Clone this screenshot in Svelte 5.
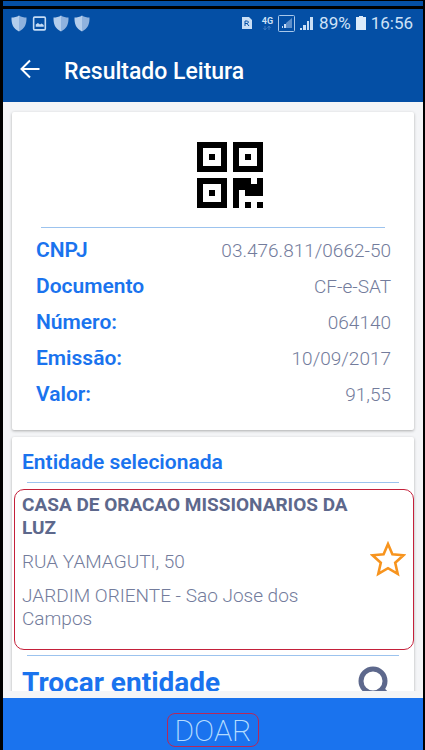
<script>
const receipt = [
    { label: 'CNPJ', value: '03.476.811/0662-50' },
    { label: 'Documento', value: 'CF-e-SAT' },
    { label: 'Número:', value: '064140' },
    { label: 'Emissão:', value: '10/09/2017' },
    { label: 'Valor:', value: '91,55' },
];

const finders = [[0, 0], [6, 0], [0, 6]];

let favorite = $state(false);
</script>

{#snippet shield()}
    <svg class="status-icon" viewBox="0 0 16 17" aria-hidden="true">
        <path d="M8 0.5C6 2 3 2.6 0.5 2.6C0.3 9 2.2 14 8 16.5Z" fill="#b3cdec" />
        <path d="M8 0.5C10 2 13 2.6 15.5 2.6C15.7 9 13.8 14 8 16.5Z" fill="#8fb2de" />
    </svg>
{/snippet}

<div class="device">
    <div class="strip"></div>
    <div class="screen">
        <header>
            <div class="status">
                <div class="status-group">
                    {@render shield()}
                    <svg class="status-icon picture" viewBox="0 0 14 16" aria-hidden="true">
                        <rect x="1" y="2" width="11" height="12" rx="1" fill="none" stroke="#c5dcf5" stroke-width="1.5" />
                        <path d="M3 11V9L5 7.5L7 9L8.500 8L10.500 9.500V11Z" fill="#c5dcf5" />
                    </svg>
                    {@render shield()}
                    {@render shield()}
                </div>
                <div class="status-group right">
                    <svg class="sim" viewBox="0 0 12 14" aria-hidden="true">
                        <path d="M1 1H8L11 4V13H1Z" fill="#c9def5" />
                        <path d="M4 10V5H6.500L7.500 6L6.500 7.500H4M6 7.500L8 10" fill="none" stroke="#044fa5" />
                    </svg>
                    <span class="network">4G<svg viewBox="0 0 8 4" aria-hidden="true"><path d="M2 0V4M0.500 2L2 4L3.500 2M6 4V0M4.500 2L6 0L7.500 2" fill="none" stroke="#3b79bf" /></svg></span>
                    <svg class="signal-box" viewBox="0 0 17 17" aria-hidden="true">
                        <rect x="0.500" y="0.500" width="16" height="16" rx="1" fill="none" stroke="#a9c8ea" />
                        <path d="M4 11H5V13H4ZM6 9H8V13H6Z" fill="#c9def5" />
                        <path d="M8 8L14 3V13H8Z" fill="#5f90ca" />
                    </svg>
                    <svg class="signal" viewBox="0 0 14 14" aria-hidden="true">
                        <path d="M0 12H2V14H0ZM3 9H6V14H3ZM7 5H9V14H7ZM10 1H13V14H10Z" fill="#c9def5" />
                    </svg>
                    <span class="percent">89%</span>
                    <svg class="battery" viewBox="0 0 10 14" aria-hidden="true">
                        <path d="M3 0H7V1H10V14H0V1H3Z" fill="#dcebfa" />
                    </svg>
                    <span>16:56</span>
                </div>
            </div>
            <div class="toolbar">
                <button class="back" type="button" aria-label="Voltar">
                    <svg viewBox="0 0 20 20" aria-hidden="true">
                        <path d="M19.500 10H2M10 1.500L1.500 10L10 18.500" fill="none" stroke="#fff" stroke-width="2" />
                    </svg>
                </button>
                <h1>Resultado Leitura</h1>
            </div>
        </header>

        <main>
            <section class="card receipt">
                <svg class="qr" viewBox="0 0 11 11" shape-rendering="crispEdges" aria-hidden="true">
                    {#each finders as [x, y]}
                        <rect x={x + 0.5} y={y + 0.5} width="4" height="4" fill="none" stroke="#000" />
                        <rect x={x + 2} y={y + 2} width="1" height="1" />
                    {/each}
                    <path d="M6 6H9V7H10V6H11V9H8V8H7V11H6ZM8 10H9V11H8ZM10 10H11V11H10Z" />
                </svg>
                <hr />
                <dl>
                    {#each receipt as row}
                        <div class="row">
                            <dt>{row.label}</dt>
                            <dd>{row.value}</dd>
                        </div>
                    {/each}
                </dl>
            </section>

            <section class="card entity">
                <h2>Entidade selecionada</h2>
                <hr />
                <div class="selected">
                    <div class="info">
                        <h3>CASA DE ORACAO MISSIONARIOS DA LUZ</h3>
                        <p>RUA YAMAGUTI, 50</p>
                        <p>JARDIM ORIENTE - Sao Jose dos Campos</p>
                    </div>
                    <button
                        class="star"
                        type="button"
                        aria-label="Favoritar"
                        aria-pressed={favorite}
                        onclick={() => (favorite = !favorite)}
                    >
                        <svg viewBox="0 0 36 36" aria-hidden="true">
                            <path
                                d="M18 3L22.400 13.200L33.500 14.300L25.200 21.800L27.700 32.800L18 27.200L8.300 32.800L10.800 21.800L2.500 14.300L13.600 13.200Z"
                                fill={favorite ? '#f7941e' : 'none'}
                                stroke="#f7941e"
                                stroke-width="2.600"
                            />
                        </svg>
                    </button>
                </div>
                <hr />
                <button class="change" type="button">
                    <span>Trocar entidade</span>
                    <svg viewBox="0 0 36 36" aria-hidden="true">
                        <circle cx="15" cy="15" r="12" fill="none" stroke="#5d688c" stroke-width="5" />
                        <path d="M23 23L33 33" stroke="#5d688c" stroke-width="6" />
                    </svg>
                </button>
            </section>
        </main>

        <footer>
            <button class="donate" type="button">DOAR</button>
        </footer>
    </div>
</div>

<style>
:global(body) {
    margin: 0;
    background: #000;
}

.device {
    display: flex;
    flex-direction: column;
    box-sizing: border-box;
    height: 100vh;
    padding: 1px 2px 0 3px;

    font-family: Roboto, "Liberation Sans", sans-serif;
    background: #000;
}

.strip {
    flex: none;
    height: 5px;
    margin-bottom: 3px;
    background: #044fa5;
}

.screen {
    display: flex;
    flex: 1;
    flex-direction: column;
    min-height: 0;
    background: #f4f5f7;
}

h1, h2, h3, p, dl, dd {
    margin: 0;
}

button {
    padding: 0;
    border: 0;
    font-family: inherit;
    background: transparent;
    cursor: pointer;
}

svg {
    display: block;
    flex: none;
}

header {
    flex: none;
    color: #fff;
    background: #044fa5;
}

.status {
    display: flex;
    align-items: center;
    justify-content: space-between;
    height: 28px;
    padding: 0 10px 0 8px;
}

.status-group {
    display: flex;
    align-items: center;
    gap: 5px;
    color: #cfe2f7;
}

.right {
    font-size: 17px;
}

.status-icon {
    width: 16px;
    height: 17px;
}

.picture {
    width: 16px;
    height: 17px;
}

.sim {
    width: 12px;
    height: 14px;
    margin-right: 4px;
}

.network {
    font-size: 9px;
    font-weight: 700;
    line-height: 9px;
}

.network svg {
    width: 8px;
    height: 4px;
    margin: 0 auto;
}

.signal-box {
    width: 17px;
    height: 17px;
}

.signal {
    width: 14px;
    height: 14px;
}

.battery {
    width: 10px;
    height: 14px;
}

.toolbar {
    display: flex;
    align-items: center;
    gap: 24px;
    height: 63px;
    padding: 0 17px 2px;
}

.back svg {
    width: 20px;
    height: 20px;
}

h1 {
    padding-top: 6px;
    font-size: 23px;
    font-weight: 500;
    line-height: 28px;
}

main {
    flex: 1;
    min-height: 0;
    margin-bottom: 7px;
    padding: 10px 9px 0;
    overflow: hidden;
}

.card {
    margin-bottom: 7px;
    border-radius: 2px;
    background: #fff;
    box-shadow: 0 1px 3px rgba(0, 0, 0, 0.3);
}

hr {
    height: 1px;
    margin: 0 15px;
    border: 0;
    background: #9cc3ee;
}

.receipt {
    padding: 30px 14px 18px;
}

.qr {
    width: 66px;
    height: 66px;
    margin: 0 auto 19px;
    padding-left: 34px;
}

dl {
    padding: 4px 9px 0 10px;
}

.row {
    display: flex;
    align-items: center;
    justify-content: space-between;
    height: 36px;
    font-size: 21px;
}

dt {
    color: #1a73ee;
    font-weight: 600;
}

dd {
    color: #737c9c;
    font-size: 19px;
    font-weight: 300;
}

h2 {
    padding: 13px 10px 8px;
    color: #1a73ee;
    font-size: 21px;
    font-weight: 600;
    line-height: 24px;
}

.selected {
    display: flex;
    align-items: center;
    justify-content: space-between;
    box-sizing: border-box;
    min-height: 161px;
    margin: 6px 0 5px 2px;
    padding: 3px 7px 19px;
    border: 1px solid #c4203a;
    border-radius: 10px;
}

.info {
    max-width: 340px;
    color: #737c9c;
    font-size: 19px;
    font-weight: 300;
    line-height: 23px;
}

h3 {
    color: #5d688c;
    font-size: 19px;
    font-weight: 700;
    line-height: 23px;
}

p {
    margin-top: 11px;
}

.star {
    margin-bottom: 6px;
}

.star svg {
    width: 36px;
    height: 36px;
}

.change {
    display: flex;
    align-items: flex-start;
    justify-content: space-between;
    width: 100%;
    padding: 10px 20px 10px 10px;
    color: #1a73ee;
    font-size: 28px;
    font-weight: 700;
    line-height: 34px;
}

.change svg {
    width: 36px;
    height: 36px;
}

footer {
    display: flex;
    flex: none;
    justify-content: center;
    padding: 15px 0 3px;
    background: #1a73ee;
}

.donate {
    height: 34px;
    padding: 2px 6px 0;
    border: 1px solid #b5295a;
    border-radius: 8px;
    color: #b5dcff;
    font-size: 30px;
    font-weight: 200;
    line-height: 30px;
}
</style>
